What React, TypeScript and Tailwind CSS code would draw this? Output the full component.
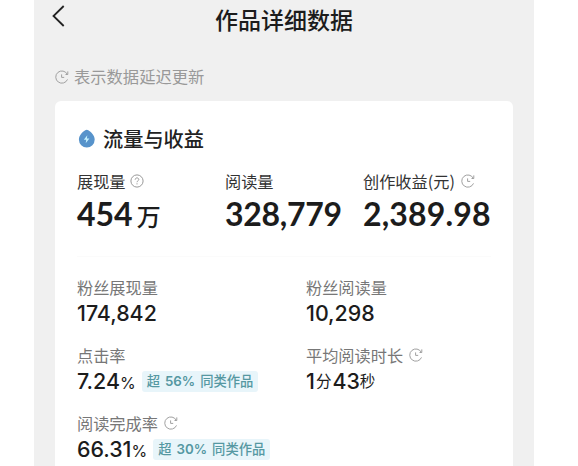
import type { ReactNode } from "react";

function DelayIcon({ className = "" }: { className?: string }) {
    return (
        <svg width="14" height="14" viewBox="0 0 14 14" fill="none" stroke="#a0a0a0" strokeWidth="1" className={`shrink-0 ${className}`}>
            <path d="M12.3 4.3A6.1 6.1 0 1 0 12.5 9.4" />
            <path d="M12.8 1.4v3.1h-2.3" />
            <path d="M6.6 4.4v3h2.6" />
        </svg>
    );
}

function HelpIcon() {
    return (
        <svg width="14" height="14" viewBox="0 0 14 14" fill="none" stroke="#999" strokeWidth="1" className="ml-[4px] shrink-0">
            <circle cx="7" cy="7" r="6.1" />
            <path d="M5.2 5.7c0-1.1.8-1.8 1.8-1.8s1.8.7 1.8 1.6c0 1.2-1.8 1.4-1.8 2.7" />
            <path d="M7 9.3v1.1" />
        </svg>
    );
}

function DropIcon() {
    return (
        <svg width="18" height="20" viewBox="0 0 18 20" className="mr-[8px] shrink-0">
            <path d="M8.2 1.2Q9.8.1 11.300 1.200C14 3 17.700 6 17.700 10.600a7.900 7.900 0 0 1-15.800 0C1.900 6 5.500 3 8.200 1.200Z" fill="#5793cb" />
            <path d="M10.3 6.200 6.800 10.700h2.400l-.5 3.600 3.700-4.700h-2.500Z" fill="#c2f1ff" />
        </svg>
    );
}

type StatProps = {
    label: string;
    icon?: ReactNode;
    children: ReactNode;
};

function BigStat({ label, icon, children }: StatProps) {
    return (
        <div className="whitespace-nowrap">
            <div className="flex h-6 items-center text-[16.2px] leading-6 text-[#333]">
                {label}
                {icon}
            </div>
            <div className="flex h-[42px] items-baseline font-['Lato','Noto_Sans_CJK_SC',sans-serif] text-[32px] leading-[42px] font-bold text-[#1c1c1c]">
                {children}
            </div>
        </div>
    );
}

function SmallStat({ label, icon, children }: StatProps) {
    return (
        <div className="h-[68px] whitespace-nowrap">
            <div className="flex h-6 items-center text-[16.2px] leading-6 text-[#777]">
                {label}
                {icon}
            </div>
            <div className="mt-[1px] flex h-[26px] items-center font-['Inter','Noto_Sans_CJK_SC',sans-serif] text-[21.4px] leading-[26px] font-medium text-[#1c1c1c]">
                {children}
            </div>
        </div>
    );
}

function Badge({ percent }: { percent: string }) {
    return (
        <span className="ml-[6px] flex h-[21px] items-center gap-[5px] rounded-[3px] bg-[#e8f5fa] px-[5px] text-[13.3px] leading-[21px] text-[#5598a2]">
            <span>超</span>
            <b className="font-semibold">{percent}</b>
            <span>同类作品</span>
        </span>
    );
}

export default function App() {
    return (
        <div className="h-[466px] w-[578px] overflow-hidden bg-white pl-[34px] font-['Noto_Sans_CJK_SC',sans-serif]">
            <div className="h-full w-[500px] bg-[#f0f0f0]">
                <header className="grid h-[64px] grid-cols-[40px_1fr_40px]">
                    <svg width="13" height="22" viewBox="0 0 13 22" fill="none" stroke="#222" strokeWidth="1.8" className="mt-[5px] ml-[18px]">
                        <path d="M11.7 1 1.5 11l10.2 10" />
                    </svg>
                    <h1 className="mt-[3px] text-center text-[23px] leading-[32px] font-medium text-[#1c1c1c]">作品详细数据</h1>
                </header>

                <p className="flex h-[37px] items-start pl-[21px] text-[16.3px] leading-[24px] text-[#999]">
                    <DelayIcon className="mt-[6px] mr-[5px]" />
                    表示数据延迟更新
                </p>

                <main className="ml-[21px] h-[380px] w-[458px] rounded-t-[6px] bg-white px-[22px] pt-[23px]">
                    <h2 className="flex h-[30px] items-center text-[20.2px] leading-[30px] font-medium text-[#222]">
                        <DropIcon />
                        流量与收益
                    </h2>

                    <section className="mt-[15px] grid h-[88px] grid-cols-[148px_138px_1fr] border-b border-[#fbfbfb]">
                        <BigStat label="展现量" icon={<HelpIcon />}>
                            454<span className="ml-[4px] text-[24px] font-medium">万</span>
                        </BigStat>
                        <BigStat label="阅读量">
                            <span className="tracking-[-0.3px]">328,779</span>
                        </BigStat>
                        <BigStat label="创作收益(元)" icon={<DelayIcon className="ml-[6px]" />}>
                            <span className="tracking-[0.15px]">2,389.98</span>
                        </BigStat>
                    </section>

                    <section className="mt-[18px] grid grid-cols-[229px_1fr]">
                        <SmallStat label="粉丝展现量">174,842</SmallStat>
                        <SmallStat label="粉丝阅读量">10,298</SmallStat>
                        <SmallStat label="点击率">
                            7.24<span className="mt-[4px] text-[16px] font-normal">%</span>
                            <Badge percent="56%" />
                        </SmallStat>
                        <SmallStat label="平均阅读时长" icon={<DelayIcon className="ml-[6px]" />}>
                            1<span className="mt-[2px] mr-[1px] ml-[1px] text-[15.5px] font-normal">分</span>43
                            <span className="mt-[2px] text-[15.5px] font-normal">秒</span>
                        </SmallStat>
                        <SmallStat label="阅读完成率" icon={<DelayIcon className="ml-[6px]" />}>
                            66.31<span className="mt-[4px] text-[16px] font-normal">%</span>
                            <Badge percent="30%" />
                        </SmallStat>
                    </section>
                </main>
            </div>
        </div>
    );
}
